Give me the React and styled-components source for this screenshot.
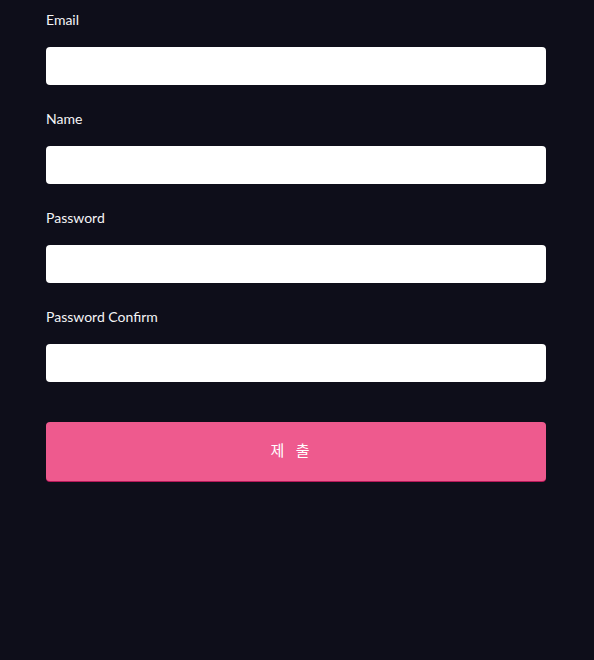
import styled, { createGlobalStyle } from "styled-components";

const GlobalStyle = createGlobalStyle`
  html, body {
    margin: 0;
    padding: 0;
    background: #0e0e1a;
  }
  body {
    font-family: "Lato", "Liberation Sans", "Noto Sans CJK KR", sans-serif;
  }
`;

const fields = [
  { id: "email", label: "Email", type: "email" },
  { id: "name", label: "Name", type: "text" },
  { id: "password", label: "Password", type: "password" },
  { id: "passwordConfirm", label: "Password Confirm", type: "password" },
];

const App = () => {
  return (
    <>
      <GlobalStyle />
      <Page>
        <Form onSubmit={(e) => e.preventDefault()}>
          {fields.map((f) => (
            <Field key={f.id}>
              <Label htmlFor={f.id}>{f.label}</Label>
              <Input id={f.id} type={f.type} />
            </Field>
          ))}
          <Submit type="submit">제 출</Submit>
        </Form>
      </Page>
    </>
  );
};

const Page = styled.div`
  min-height: 660px;
  background: #0e0e1a;
  padding: 11px 48px 0 46px;
  box-sizing: border-box;
`;

const Form = styled.form`
  width: 500px;
  display: flex;
  flex-direction: column;
`;

const Field = styled.div`
  display: flex;
  flex-direction: column;
  margin-bottom: 25px;
`;

const Label = styled.label`
  color: #f4f4f6;
  font-size: 14px;
  line-height: 17px;
  height: 17px;
  margin-bottom: 19px;
`;

const Input = styled.input`
  height: 38px;
  box-sizing: border-box;
  border: none;
  border-radius: 4px;
  background: #ffffff;
  padding: 0 12px;
  font-size: 14px;
  outline: none;
`;

const Submit = styled.button`
  margin-top: 15px;
  height: 59px;
  padding: 0 8px 4px 0;
  border: none;
  border-radius: 4px;
  background: #ee5a8e;
  box-shadow: 0 1px 0 #b8195a;
  color: #ffffff;
  font-family: "Noto Sans CJK KR", sans-serif;
  font-size: 15px;
  letter-spacing: 4px;
  cursor: pointer;
`;

export default App;
